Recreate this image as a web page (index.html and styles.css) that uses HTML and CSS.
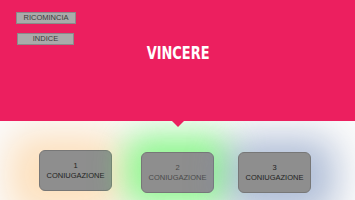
FILE: index.html
```html
<!DOCTYPE html>
<html lang="it">
<head>
    <meta charset="UTF-8">
    <meta name="viewport" content="width=device-width, initial-scale=1.0">
    <title>Vincere</title>
    <link rel="stylesheet" href="styles.css">
</head>
<body>
    <!-- Header -->
    <div class="header">
        <div class="nav">
            <button class="nav-btn">RICOMINCIA</button>
            <button class="nav-btn short">INDICE</button>
        </div>
        <h1>VINCERE</h1>
        <div class="arrow"></div>
    </div>

    <!-- Coniugazioni -->
    <div class="cards">
        <div class="card orange">1<br>CONIUGAZIONE</div>
        <div class="card green">2<br>CONIUGAZIONE</div>
        <div class="card blue">3<br>CONIUGAZIONE</div>
    </div>
</body>
</html>
```

FILE: styles.css
```css
/* Basic styling */
html, body {
    height: 100%;
}
body {
    font-family: 'Liberation Sans', Arial, sans-serif;
    margin: 0;
    padding: 0;
    background-color: #fbfbfb;
    color: #333;
}

/* Header */
.header {
    display: grid;
    height: 121px;
    background-color: #ec1f5f;
    position: relative;
    z-index: 1;
}
.header > .nav, .header > h1 {
    grid-area: 1 / 1;
}
.nav {
    display: flex;
    flex-direction: column;
    align-items: flex-start;
    gap: 9px;
    padding: 12px 0 0 16px;
}
.nav-btn {
    width: 60px;
    height: 12px;
    padding: 0;
    border: 1px solid #8a8a8a;
    background-color: #aaaaaa;
    color: #3a3a3a;
    font-family: 'Liberation Sans', Arial, sans-serif;
    font-size: 7.5px;
    line-height: 10px;
}
.nav-btn.short {
    width: 57px;
    margin-left: 1px;
}
h1 {
    margin: 0;
    align-self: center;
    justify-self: center;
    padding: 0 0 16px 2px;
    color: white;
    font-family: 'DejaVu Sans Condensed', 'DejaVu Sans', sans-serif;
    font-size: 18px;
    font-weight: bold;
    transform: scaleX(0.8);
}
.arrow {
    position: absolute;
    left: 171px;
    bottom: -6px;
    width: 0;
    height: 0;
    border-left: 7px solid transparent;
    border-right: 7px solid transparent;
    border-top: 7px solid #ec1f5f;
}

/* Cards */
.cards {
    display: flex;
    justify-content: center;
    align-items: flex-start;
    gap: 24px;
    padding: 29px 5px 0 0;
    height: 60px;
}
.card {
    width: 71px;
    height: 39px;
    box-sizing: content-box;
    border: 1px solid #777;
    border-radius: 6px;
    background-color: #8e8e8e;
    color: #222;
    font-size: 7.5px;
    line-height: 10px;
    text-align: center;
    display: flex;
    align-items: center;
    justify-content: center;
}
.card.orange {
    margin-right: 5px;
    box-shadow: -10px 4px 36px 20px rgba(255, 200, 130, 0.5);
}
.card.green {
    margin-top: 2px;
    color: #4a4a4a;
    box-shadow: 0 -2px 32px 16px rgba(90, 245, 90, 0.65);
}
.card.blue {
    margin-top: 2px;
    box-shadow: 6px 4px 36px 18px rgba(115, 140, 185, 0.55);
}
```
